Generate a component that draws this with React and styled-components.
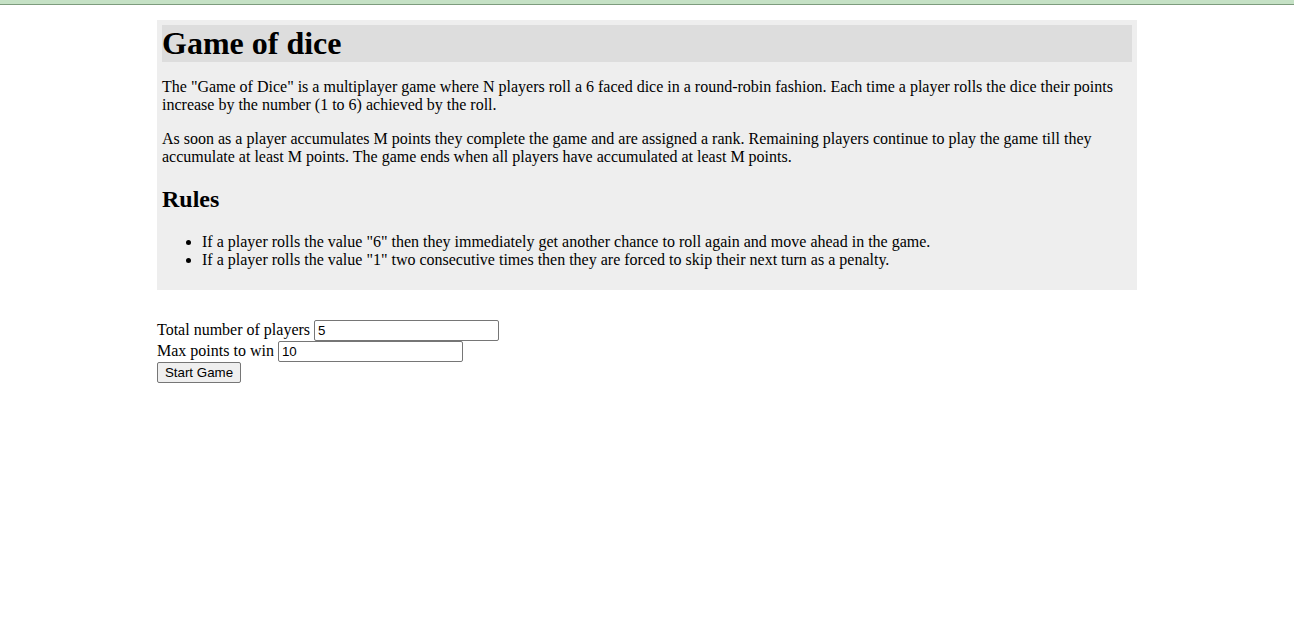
import React from "react";
import styled, { createGlobalStyle } from "styled-components";

const Global = createGlobalStyle`
  html, body { margin: 0; padding: 0; background: #fff; }
  body { font-family: "Liberation Serif", "Times New Roman", serif; font-size: 16px; color: #000; }
`;

const TopBar = styled.div`
  height: 4px;
  background: #c5e1c5;
  border-bottom: 1px solid #7d9b7d;
`;

const Container = styled.main`
  width: 980px;
  margin: 15px auto 0;
`;

const Panel = styled.section`
  background: #eeeeee;
  padding: 5px;
`;

const Title = styled.h1`
  margin: 0;
  background: #dddddd;
  font-size: 32px;
  font-weight: bold;
`;

const Para = styled.p`
  margin: 16px 0;
`;

const SubTitle = styled.h2`
  font-size: 24px;
  margin: 19.92px 0;
`;

const List = styled.ul`
  margin: 16px 0;
  padding-left: 40px;
`;

const Form = styled.form`
  margin-top: 30px;
`;

const Row = styled.div`
  height: 21px;
  display: flex;
  align-items: center;
  gap: 4px;
`;

const Input = styled.input`
  box-sizing: border-box;
  width: 185px;
  height: 21px;
  padding: 1px 3px;
  border: 1px solid #767676;
  border-radius: 2px;
  font-family: "Liberation Sans", Arial, sans-serif;
  font-size: 13.33px;
  background: #fff;
  color: #000;
`;

const Button = styled.button`
  box-sizing: border-box;
  height: 21px;
  width: 84px;
  padding: 1px 6px;
  border: 1px solid #767676;
  border-radius: 2px;
  background: #efefef;
  font-family: "Liberation Sans", Arial, sans-serif;
  font-size: 13.33px;
  color: #000;
`;

export default function App() {
  return (
    <>
      <Global />
      <TopBar />
      <Container>
        <Panel>
          <Title>Game of dice</Title>
          <Para>
            The "Game of Dice" is a multiplayer game where N players roll a 6 faced dice in a round-robin fashion. Each time a player rolls the dice their points increase by the number (1 to 6) achieved by the roll.
          </Para>
          <Para>
            As soon as a player accumulates M points they complete the game and are assigned a rank. Remaining players continue to play the game till they accumulate at least M points. The game ends when all players have accumulated at least M points.
          </Para>
          <SubTitle>Rules</SubTitle>
          <List>
            <li>If a player rolls the value "6" then they immediately get another chance to roll again and move ahead in the game.</li>
            <li>If a player rolls the value "1" two consecutive times then they are forced to skip their next turn as a penalty.</li>
          </List>
        </Panel>
        <Form onSubmit={(e) => e.preventDefault()}>
          <Row>
            <label htmlFor="players">Total number of players</label>
            <Input id="players" type="text" defaultValue="5" />
          </Row>
          <Row>
            <label htmlFor="points">Max points to win</label>
            <Input id="points" type="text" defaultValue="10" />
          </Row>
          <Row>
            <Button type="submit">Start Game</Button>
          </Row>
        </Form>
      </Container>
    </>
  );
}
